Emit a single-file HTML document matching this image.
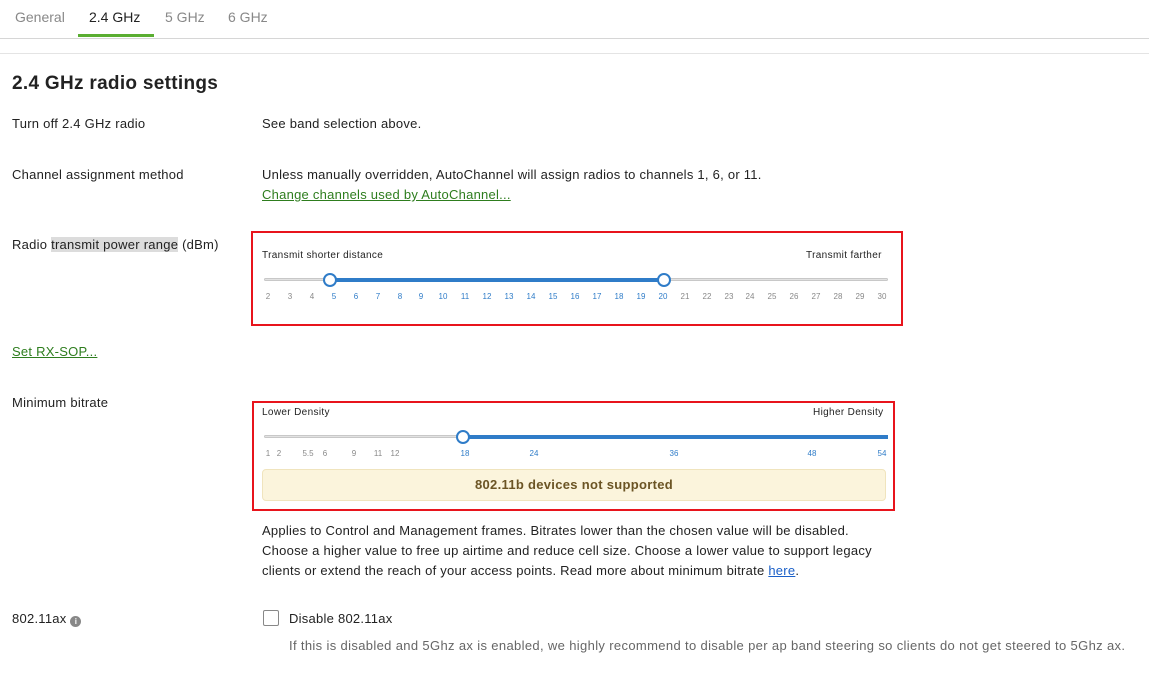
<!DOCTYPE html>
<html><head><meta charset="utf-8"><style>
*{margin:0;padding:0;box-sizing:border-box}
body{width:1149px;height:692px;background:#fff;font-family:"Liberation Sans",sans-serif;color:#222;position:relative;overflow:hidden;font-size:13px}
.a{position:absolute;white-space:nowrap}
.t{font-size:14px;color:#888;top:9px}
.lbl{font-size:13px;letter-spacing:0.25px;color:#222}
.lnk{color:#2e7d1e;text-decoration:underline}
.box{position:absolute;border:2px solid #e8141c}
.track{position:absolute;height:3px;background:#e2e2e2;border:1px solid #c8c8c8;border-radius:2px}
.fill{position:absolute;height:4px;background:#2f7cc8}
.h{position:absolute;width:14px;height:14px;border-radius:50%;border:2px solid #2f7cc8;background:#fff}
.tk{position:absolute;font-size:8px;color:#888;transform:translateX(-50%)}
.tk.b{color:#2f7cc8}
.sm{font-size:10px;letter-spacing:0.35px;color:#222}
</style></head><body>
<div class="a t" style="left:15px">General</div>
<div class="a t" style="left:89px;color:#222">2.4 GHz</div>
<div class="a t" style="left:165px">5 GHz</div>
<div class="a t" style="left:228px">6 GHz</div>
<div class="a" style="left:78px;top:34px;width:76px;height:3px;background:#5aae32"></div>
<div class="a" style="left:0;top:38px;width:1149px;height:1px;background:#d6d6d6"></div>
<div class="a" style="left:0;top:53px;width:1149px;height:1px;background:#e4e4e4"></div>
<div class="a" style="left:12px;top:73px;font-size:19px;letter-spacing:0.3px;font-weight:bold;color:#222">2.4 GHz radio settings</div>

<div class="a lbl" style="left:12px;top:116px">Turn off 2.4 GHz radio</div>
<div class="a lbl" style="left:262px;top:116px">See band selection above.</div>
<div class="a lbl" style="left:12px;top:167px">Channel assignment method</div>
<div class="a lbl" style="left:262px;top:167px">Unless manually overridden, AutoChannel will assign radios to channels 1, 6, or 11.</div>
<div class="a lbl lnk" style="left:262px;top:187px">Change channels used by AutoChannel...</div>
<div class="a lbl" style="left:12px;top:237px">Radio <span style="background:#dcdcdc">transmit power range</span> (dBm)</div>
<div class="a lbl lnk" style="left:12px;top:344px">Set RX-SOP...</div>
<div class="a lbl" style="left:12px;top:395px">Minimum bitrate</div>

<div class="box" style="left:251px;top:231px;width:652px;height:95px"></div>
<div class="a sm" style="left:262px;top:250px">Transmit shorter distance</div>
<div class="a sm" style="left:806px;top:250px">Transmit farther</div>
<div class="track" style="left:264px;top:278px;width:624px"></div>
<div class="fill" style="left:330px;top:278px;width:334px"></div>
<div class="h" style="left:323px;top:273px"></div>
<div class="h" style="left:657px;top:273px"></div>
<div class="a" style="left:0;top:292px;width:1149px;height:12px">
<span class="tk" style="left:268px">2</span><span class="tk" style="left:290px">3</span><span class="tk" style="left:312px">4</span><span class="tk b" style="left:334px">5</span><span class="tk b" style="left:356px">6</span><span class="tk b" style="left:378px">7</span><span class="tk b" style="left:400px">8</span><span class="tk b" style="left:421px">9</span><span class="tk b" style="left:443px">10</span><span class="tk b" style="left:465px">11</span><span class="tk b" style="left:487px">12</span><span class="tk b" style="left:509px">13</span><span class="tk b" style="left:531px">14</span><span class="tk b" style="left:553px">15</span><span class="tk b" style="left:575px">16</span><span class="tk b" style="left:597px">17</span><span class="tk b" style="left:619px">18</span><span class="tk b" style="left:641px">19</span><span class="tk b" style="left:663px">20</span><span class="tk" style="left:685px">21</span><span class="tk" style="left:707px">22</span><span class="tk" style="left:729px">23</span><span class="tk" style="left:750px">24</span><span class="tk" style="left:772px">25</span><span class="tk" style="left:794px">26</span><span class="tk" style="left:816px">27</span><span class="tk" style="left:838px">28</span><span class="tk" style="left:860px">29</span><span class="tk" style="left:882px">30</span>
</div>

<div class="box" style="left:252px;top:401px;width:643px;height:110px"></div>
<div class="a sm" style="left:262px;top:407px">Lower Density</div>
<div class="a sm" style="left:813px;top:407px">Higher Density</div>
<div class="track" style="left:264px;top:435px;width:624px"></div>
<div class="fill" style="left:463px;top:435px;width:425px"></div>
<div class="h" style="left:456px;top:430px"></div>
<div class="a" style="left:0;top:449px;width:1149px;height:12px">
<span class="tk" style="left:268px">1</span><span class="tk" style="left:279px">2</span><span class="tk" style="left:308px">5.5</span><span class="tk" style="left:325px">6</span><span class="tk" style="left:354px">9</span><span class="tk" style="left:378px">11</span><span class="tk" style="left:395px">12</span><span class="tk b" style="left:465px">18</span><span class="tk b" style="left:534px">24</span><span class="tk b" style="left:674px">36</span><span class="tk b" style="left:812px">48</span><span class="tk b" style="left:882px">54</span>
</div>
<div class="a" style="left:262px;top:469px;width:624px;height:32px;background:#fbf4dc;border:1px solid #f0e4bd;border-radius:4px;text-align:center;line-height:30px;font-size:13px;letter-spacing:0.3px;font-weight:bold;color:#6b5424">802.11b devices not supported</div>

<div class="a lbl" style="left:262px;top:521px;line-height:20px">Applies to Control and Management frames. Bitrates lower than the chosen value will be disabled.<br>Choose a higher value to free up airtime and reduce cell size. Choose a lower value to support legacy<br>clients or extend the reach of your access points. Read more about minimum bitrate <span style="color:#1a5fc8;text-decoration:underline">here</span>.</div>

<div class="a lbl" style="left:12px;top:611px">802.11ax <span style="display:inline-block;width:11px;height:11px;border-radius:50%;background:#888;color:#fff;font-size:8px;font-weight:bold;text-align:center;line-height:11px;vertical-align:-1px;letter-spacing:0">i</span></div>
<div class="a" style="left:263px;top:610px;width:16px;height:16px;border:1px solid #888;border-radius:2px;background:#fff"></div>
<div class="a lbl" style="left:289px;top:611px">Disable 802.11ax</div>
<div class="a lbl" style="left:289px;top:638px;color:#666;letter-spacing:0.35px">If this is disabled and 5Ghz ax is enabled, we highly recommend to disable per ap band steering so clients do not get steered to 5Ghz ax.</div>
</body></html>
